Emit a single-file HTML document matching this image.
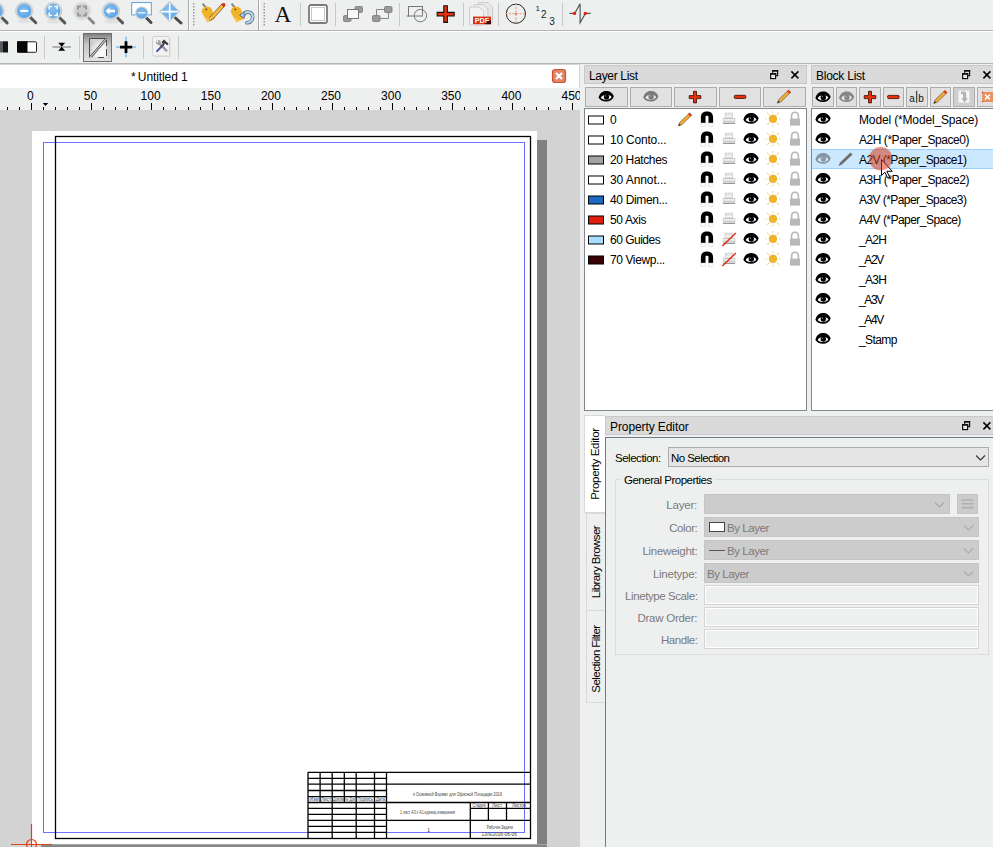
<!DOCTYPE html>
<html><head><meta charset="utf-8">
<style>
*{box-sizing:border-box;margin:0;padding:0}
html,body{width:993px;height:847px;overflow:hidden;background:#eef0f0;font-family:"Liberation Sans",sans-serif;font-size:11.5px;color:#000}
.a{position:absolute}
.t{position:absolute;white-space:nowrap;line-height:1}
svg{position:absolute;overflow:visible}
.btn{position:absolute;background:#e1e1e1;border:1px solid #adadad}
</style></head><body>
<svg width="0" height="0" style="left:0;top:0">
<defs>
  <radialGradient id="gBlue" cx="0.45" cy="0.4" r="0.6"><stop offset="0" stop-color="#86bff0"/><stop offset="1" stop-color="#5aa5e8"/></radialGradient>
  <g id="mag">
    <ellipse cx="1" cy="10.5" rx="8" ry="2" fill="#000" opacity="0.05"/>
    <line x1="6.2" y1="6.5" x2="11.6" y2="11.9" stroke="#575757" stroke-width="2.9" stroke-linecap="round"/>
    <circle cx="0" cy="0" r="8.8" fill="#d6d6d6" stroke="#c4c4c4" stroke-width="0.6"/>
    <circle cx="0" cy="0" r="7.2" fill="url(#gBlue)"/>
  </g>
  <g id="magGray">
    <line x1="6.2" y1="6.5" x2="11.6" y2="11.9" stroke="#8a8a8a" stroke-width="2.9" stroke-linecap="round"/>
    <circle cx="0" cy="0" r="8.8" fill="#e2e2e2" stroke="#d4d4d4" stroke-width="0.6"/>
    <circle cx="0" cy="0" r="7.2" fill="#cdcdcd"/>
  </g>
  <g id="eye">
    <path d="M-7.6,1.2 C-6.5,-3.8 -3,-5.4 0.2,-5.4 C3.5,-5.4 6.6,-3.6 7.6,0.3 C6.4,3.8 3.5,5.3 0,5.3 C-3.5,5.3 -6.3,4 -7.6,1.2Z" fill="#000"/>
    <path d="M-5.3,1.4 C-4.2,-0.8 -2,-1.6 0,-1.6 C2.2,-1.6 4.4,-0.9 5.4,0.8 C4.2,3 2.2,3.4 0,3.4 C-2.2,3.4 -4.2,3 -5.3,1.4Z" fill="#fff"/>
    <circle cx="0.3" cy="0.6" r="2.7" fill="#000"/>
    <circle cx="-0.6" cy="-0.3" r="0.7" fill="#777"/>
  </g>

  <g id="eyeG">
    <path d="M-7.6,1.2 C-6.5,-3.8 -3,-5.4 0.2,-5.4 C3.5,-5.4 6.6,-3.6 7.6,0.3 C6.4,3.8 3.5,5.3 0,5.3 C-3.5,5.3 -6.3,4 -7.6,1.2Z" fill="#000"/>
    <path d="M-5.3,1.4 C-4.2,-0.8 -2,-1.6 0,-1.6 C2.2,-1.6 4.4,-0.9 5.4,0.8 C4.2,3 2.2,3.4 0,3.4 C-2.2,3.4 -4.2,3 -5.3,1.4Z" fill="#fff"/>
    <circle cx="0.3" cy="0.6" r="2.7" fill="#000"/>
    <circle cx="-0.6" cy="-0.3" r="0.7" fill="#777"/>
  </g>
  <g id="pencil">
    <path d="M-6.7,6.5 L-5.2,2.8 L4.5,-6.6 L6.8,-4.4 L-2.9,5.1Z" fill="#f0a830" stroke="#555" stroke-width="0.6"/>
    <path d="M3,-5.2 L4.5,-6.6 L6.8,-4.4 L5.3,-3Z" fill="#e8301a"/>
    <path d="M-6.7,6.5 L-5.6,3.9 L-4.1,5.4Z" fill="#333"/>
  </g>
  <g id="magnet">
    <path d="M-6.1,4 V-1.5 C-6.1,-5.8 -3.5,-7.4 0,-7.4 C3.5,-7.4 6.1,-5.8 6.1,-1.5 V4 H1.5 V-1.8 C1.5,-3 0.8,-3.3 0,-3.3 C-0.8,-3.3 -1.5,-3 -1.5,-1.8 V4Z" fill="#000"/>
    <rect x="-6.1" y="4" width="4.6" height="3.4" fill="#fff" stroke="#d0d0d0" stroke-width="0.5"/>
    <rect x="1.5" y="4" width="4.6" height="3.4" fill="#fff" stroke="#d0d0d0" stroke-width="0.5"/>
  </g>
  <g id="printer">
    <rect x="-3.9" y="-5.9" width="7.6" height="5.5" fill="#e6e6e6" stroke="#cacaca" stroke-width="0.7"/>
    <rect x="-3.2" y="-3" width="6.2" height="1.2" fill="#f8f8f8"/>
    <rect x="-4" y="-1.2" width="7.8" height="1" fill="#a8a8a8"/>
    <rect x="-5.8" y="-0.4" width="11.7" height="5" fill="#eef0f0" stroke="#c4c4c4" stroke-width="0.7"/>
    <rect x="-5.2" y="1.8" width="10.5" height="1" fill="#c0c0c0"/>
    <rect x="-5.8" y="3.8" width="11.7" height="1.1" fill="#8e8e8e"/>
  </g>
  <g id="sun">
    <g stroke="#f3d49a" stroke-width="1.3">
      <line x1="0" y1="-7.6" x2="0" y2="-6"/><line x1="0" y1="6" x2="0" y2="7.6"/>
      <line x1="-7.6" y1="0" x2="-6" y2="0"/><line x1="6" y1="0" x2="7.6" y2="0"/>
    </g>
    <g stroke="#f0b850" stroke-width="0.9">
      <line x1="-6" y1="-6" x2="-3.9" y2="-3.9"/><line x1="6" y1="6" x2="3.9" y2="3.9"/>
      <line x1="-6" y1="6" x2="-3.9" y2="3.9"/><line x1="6" y1="-6" x2="3.9" y2="-3.9"/>
    </g>
    <circle cx="0" cy="0" r="3.9" fill="#f0b428" stroke="#e0a020" stroke-width="0.5"/>
  </g>
  <g id="lock">
    <path d="M-3.4,0 V-3 C-3.4,-5.7 -1.8,-6.7 0,-6.7 C1.8,-6.7 3.4,-5.7 3.4,-3 V0" fill="none" stroke="#b8b8b8" stroke-width="1.6"/>
    <rect x="-5" y="-0.4" width="10" height="7" fill="#b8b8b8"/>
  </g>
</defs>
</svg>

<!-- ========== TOOLBAR ROW 1 ========== -->
<div class="a" style="left:0;top:30px;width:993px;height:1px;background:#b4b4b4"></div>
<div class="a" style="left:0;top:31px;width:993px;height:1px;background:#fff"></div>
<div class="a" style="left:0;top:63px;width:993px;height:1px;background:#b4b4b4"></div>
<svg width="993" height="64" style="left:0;top:0">
  <!-- partial magnifier -->
  <use href="#mag" x="-4.5" y="11"/>
  <!-- zoom out -->
  <use href="#mag" x="24.2" y="10.9"/>
  <rect x="20.2" y="9.9" width="8" height="2" fill="#fff"/>
  <!-- zoom auto -->
  <use href="#mag" x="53.2" y="11"/>
  <path d="M49.2,9.5 v-3 h3 M54.2,6.5 h3 v3 M57.2,12.5 v3 h-3 M52.2,15.5 h-3 v-3" stroke="#fff" stroke-width="1.5" fill="none"/>
  <!-- zoom previous (disabled) -->
  <use href="#magGray" x="82" y="11"/>
  <path d="M78,9.5 v-3 h3 M83,6.5 h3 v3 M86,12.5 v3 h-3 M81,15.5 h-3 v-3" stroke="#9a9a9a" stroke-width="2" fill="none"/>
  <!-- zoom back -->
  <use href="#mag" x="111" y="11"/>
  <path d="M105.5,11 l4,-3.5 v2.2 h5.5 v2.6 h-5.5 v2.2z" fill="#fff"/>
  <!-- zoom window -->
  <rect x="131.7" y="2.6" width="19.6" height="12.3" fill="#fff" stroke="#5a9fe0" stroke-width="1"/>
  <line x1="146" y1="17.5" x2="151" y2="22.5" stroke="#4a4a4a" stroke-width="3" stroke-linecap="round"/>
  <circle cx="141.7" cy="13" r="6.6" fill="#cfcfcf"/>
  <circle cx="141.7" cy="13" r="5.4" fill="url(#gBlue)"/><rect x="137.5" y="12" width="8.4" height="1.6" fill="#cfe6fa"/>
  <!-- zoom pan -->
  <line x1="175" y1="17.5" x2="181" y2="23" stroke="#4a4a4a" stroke-width="3" stroke-linecap="round"/>
  <path d="M169.7,1.7 L179.6,11.6 L169.7,21.5 L159.8,11.6Z" fill="url(#gBlue)" stroke="#d0d0d0" stroke-width="1.2"/>
  <path d="M169.7,3 v17.2 M161,11.6 h17.4" stroke="#fff" stroke-width="1.6"/>
  <!-- separator + grip -->
  <rect x="188" y="0" width="1" height="30" fill="#a8a8a8"/>
  <rect x="189" y="0" width="1" height="30" fill="#fff"/>
  <g fill="#9a9a9a"><rect x="193" y="3" width="1.5" height="1.5"/><rect x="193" y="6" width="1.5" height="1.5"/><rect x="193" y="9" width="1.5" height="1.5"/><rect x="193" y="12" width="1.5" height="1.5"/><rect x="193" y="15" width="1.5" height="1.5"/><rect x="193" y="18" width="1.5" height="1.5"/><rect x="193" y="21" width="1.5" height="1.5"/><rect x="193" y="24" width="1.5" height="1.5"/></g>
  <!-- tag + pencil -->
  <line x1="202.6" y1="3.6" x2="205.6" y2="7.2" stroke="#8a8a8a" stroke-width="2.2"/>
  <path d="M201.5,11.8 C202,8.5 204.5,6.6 207,6.6 C209,6.6 211,7.5 212,9.2 L215,18.6 L207.4,22.6 Z" fill="#f0b428"/>
  <path d="M203.5,16 L207.4,22.6 L211,20.7Z" fill="#f6cc6a" opacity="0.8"/>
  <circle cx="206.3" cy="9.4" r="0.9" fill="#5a4a2a"/>
  <path d="M209.8,17.2 L222,3.8 L224.6,6.3 L212.3,19.7 L209.6,20.2Z" fill="#f6b83a" stroke="#5a4a3a" stroke-width="0.7"/>
  <path d="M221.2,4.6 L222.3,3.5 C223.3,2.6 224.4,2.8 225,3.6 C225.6,4.4 225.5,5.3 224.8,6.1 L223.7,7.2Z" fill="#e22a10"/>
  <path d="M209.8,17.2 L211.2,18.6 L209.6,20.2Z" fill="#fff0d0"/>
  <!-- tag + undo -->
  <line x1="231.6" y1="3.6" x2="234.6" y2="7.2" stroke="#8a8a8a" stroke-width="2.2"/>
  <path d="M230.5,11.8 C231,8.5 233.5,6.6 236,6.6 C238,6.6 240,7.5 241,9.2 L244,18.6 L236.4,22.6 Z" fill="#f0b428"/>
  <path d="M232.5,16 L236.4,22.6 L240,20.7Z" fill="#f6cc6a" opacity="0.8"/>
  <circle cx="235.3" cy="9.4" r="0.9" fill="#5a4a2a"/>
  <path d="M243.5,15.5 C244.5,12.5 247,11.8 249,12.2 C251.5,12.8 253,15 252.6,18 C252.2,21 249.5,23 247,22.8" fill="none" stroke="#5a6470" stroke-width="3.6" stroke-linecap="round"/>
  <path d="M243.5,15.5 C244.5,12.5 247,11.8 249,12.2 C251.5,12.8 253,15 252.6,18 C252.2,21 249.5,23 247,22.8" fill="none" stroke="#b4defa" stroke-width="2" stroke-linecap="round"/>
  <path d="M239.6,15.2 L244.2,11.6 L244.2,18.4Z" fill="#a6d6f6" stroke="#5a6470" stroke-width="0.9" stroke-linejoin="round"/>
  <!-- separator + grip -->
  <rect x="258" y="0" width="1" height="30" fill="#a8a8a8"/>
  <rect x="259" y="0" width="1" height="30" fill="#fff"/>
  <g fill="#9a9a9a"><rect x="263.5" y="3" width="1.5" height="1.5"/><rect x="263.5" y="6" width="1.5" height="1.5"/><rect x="263.5" y="9" width="1.5" height="1.5"/><rect x="263.5" y="12" width="1.5" height="1.5"/><rect x="263.5" y="15" width="1.5" height="1.5"/><rect x="263.5" y="18" width="1.5" height="1.5"/><rect x="263.5" y="21" width="1.5" height="1.5"/><rect x="263.5" y="24" width="1.5" height="1.5"/></g>
  <!-- A -->
  <text x="283" y="22.3" text-anchor="middle" font-family="Liberation Serif" font-size="23.3" fill="#111">A</text>
  <rect x="300" y="3" width="1" height="23" fill="#c8c8c8"/>
  <!-- square -->
  <rect x="309" y="5" width="18" height="18" rx="2" fill="#fff" stroke="#7a7a7a" stroke-width="1.8"/>
  <rect x="311.5" y="7.5" width="13" height="13" fill="#fff" stroke="#c8c8c8" stroke-width="1"/>
  <rect x="335" y="3" width="1" height="23" fill="#c8c8c8"/>
  <!-- block icons -->
  <rect x="343.5" y="15.5" width="7.5" height="6" rx="1.2" fill="#9a9a9a" stroke="#777" stroke-width="0.8"/>
  <rect x="355" y="6.5" width="7.5" height="6" rx="1.2" fill="#9a9a9a" stroke="#777" stroke-width="0.8"/>
  <rect x="347.5" y="9.5" width="11" height="9" fill="#f8f8f8" stroke="#777" stroke-width="1"/>
  <path d="M376.5,15.5 V9.5 H388.5 V18.5 H380" fill="none" stroke="#888" stroke-width="1"/>
  <rect x="372.5" y="15.5" width="7.5" height="6" rx="1.2" fill="#9a9a9a" stroke="#777" stroke-width="0.8"/>
  <rect x="384.5" y="6.5" width="7.5" height="6" rx="1.2" fill="#9a9a9a" stroke="#777" stroke-width="0.8"/>
  <rect x="399" y="3" width="1" height="23" fill="#c8c8c8"/>
  <!-- rect circle -->
  <rect x="408.5" y="6.5" width="14" height="9.5" fill="none" stroke="#777" stroke-width="1"/>
  <circle cx="420.4" cy="15.6" r="6.2" fill="none" stroke="#777" stroke-width="1"/>
  <line x1="406.5" y1="16" x2="409" y2="16" stroke="#777" stroke-width="1"/>
  <!-- red cross -->
  <path d="M443.8,5.8 h3.6 v6.6 h6.8 v3.6 h-6.8 v6.4 h-3.6 v-6.4 h-6.6 v-3.6 h6.6z" fill="#e8300a" stroke="#111" stroke-width="1.1"/>
  <rect x="463" y="3" width="1" height="23" fill="#c8c8c8"/>
  <!-- pdf -->
  <path d="M478.5,2.5 h9.5 l4.5,4.5 v16 h-14z" fill="#e8e8e8" stroke="#c4c4c4" stroke-width="0.8"/>
  <path d="M474,4.5 h9.5 l4.5,4.5 v15 h-14z" fill="#ececec" stroke="#c4c4c4" stroke-width="0.8"/>
  <path d="M469.5,7 h9.5 l4.5,4.5 v13.5 h-14z" fill="#f2f2f2" stroke="#c4c4c4" stroke-width="0.8"/>
  <rect x="473" y="16.6" width="18" height="7.6" fill="#d8300c"/>
  <rect x="485" y="20.5" width="6" height="3.7" fill="#3a0a0a"/>
  <text x="482" y="23.4" text-anchor="middle" font-family="Liberation Sans" font-weight="bold" font-size="7.2" fill="#fff">PDF</text>
  <rect x="498" y="3" width="1" height="23" fill="#c8c8c8"/>
  <!-- circle crosshair -->
  <circle cx="515.9" cy="13.7" r="9.6" fill="none" stroke="#222" stroke-width="1"/>
  <path d="M515.9,3.5 v20.5 M505.5,13.7 h20.8" stroke="#f0a080" stroke-width="1.3" stroke-dasharray="2,1.5"/>
  <circle cx="515.9" cy="13.7" r="1" fill="#e08060"/>
  <!-- 123 -->
  <text x="535.5" y="10.6" font-family="Liberation Sans" font-size="8" fill="#222">1</text>
  <text x="541" y="17.5" font-family="Liberation Sans" font-size="10" fill="#222">2</text>
  <text x="549.3" y="24.8" font-family="Liberation Sans" font-size="10" fill="#222">3</text>
  <rect x="562" y="3" width="1" height="23" fill="#c8c8c8"/>
  <!-- spike -->
  <path d="M569.5,13.4 H574.8 L580.1,3.7 V22.7 L585.4,13.4 H590.7" fill="none" stroke="#555" stroke-width="1.2"/>
  <circle cx="574.5" cy="13.4" r="1.7" fill="#e8200a"/>
  <circle cx="585.3" cy="13.4" r="1.7" fill="#e8200a"/>

  <!-- ========== ROW 2 ========== -->
  <rect x="0" y="41.3" width="3" height="11.2" fill="#5a5a62"/>
  <rect x="3" y="41.3" width="5" height="11.2" fill="#151515"/>
  <rect x="17.5" y="41.8" width="19" height="10.5" rx="1" fill="#fff" stroke="#222" stroke-width="1"/>
  <rect x="17" y="41.3" width="10.5" height="11.2" fill="#050505"/>
  <rect x="44" y="36" width="1" height="23" fill="#c8c8c8"/>
  <line x1="52.5" y1="47" x2="71" y2="47" stroke="#9a9a9a" stroke-width="1.5"/>
  <path d="M58.2,42.8 h7 l-3.5,4 l3.5,4 h-7 l3.5,-4z" fill="#000"/>
  <rect x="79" y="36" width="1" height="23" fill="#c8c8c8"/>
  <!-- pressed button -->
  <defs><linearGradient id="gPress" x1="0" y1="0" x2="0" y2="1"><stop offset="0" stop-color="#8c8c8c"/><stop offset="0.35" stop-color="#b8b8b8"/><stop offset="1" stop-color="#dcdcdc"/></linearGradient>
  <radialGradient id="gPaper" cx="0.6" cy="0.65" r="0.6"><stop offset="0" stop-color="#fff"/><stop offset="1" stop-color="#d8d8d8"/></radialGradient></defs>
  <defs><linearGradient id="gPress2" x1="0" y1="0" x2="0" y2="1"><stop offset="0" stop-color="#777"/><stop offset="0.12" stop-color="#9a9a9a"/><stop offset="0.4" stop-color="#c6c6c6"/><stop offset="1" stop-color="#e2e2e2"/></linearGradient>
  <radialGradient id="gPaper2" cx="0.7" cy="0.75" r="0.75"><stop offset="0" stop-color="#fff"/><stop offset="0.6" stop-color="#ececec"/><stop offset="1" stop-color="#cfcfcf"/></radialGradient></defs>
  <rect x="83.5" y="33.5" width="28" height="28" fill="url(#gPress2)" stroke="#6e6e6e" stroke-width="1"/>
  <rect x="89.5" y="38.5" width="17" height="19" fill="url(#gPaper2)"/>
  <path d="M89.5,57.5 V38.5 H106.5" fill="none" stroke="#4a4a4a" stroke-width="1"/>
  <path d="M106.5,40 V46 M106.5,49 V56 M98,57.5 H104" fill="none" stroke="#4a4a4a" stroke-width="1"/>
  <line x1="91" y1="56.6" x2="106" y2="39" stroke="#555" stroke-width="2.6"/>
  <line x1="91" y1="56.6" x2="106" y2="39" stroke="#e8e8e8" stroke-width="1"/>
  <circle cx="91.6" cy="44" r="0.4" fill="#666"/><circle cx="91.6" cy="50" r="0.4" fill="#666"/>
  <!-- crosshair plus -->
  <path d="M126,36.7 v20.6 M115.9,47.1 h20.1" stroke="#8ac8f6" stroke-width="1.8"/>
  <path d="M126,41.3 v11.7 M120,47.1 h12.2" stroke="#000" stroke-width="2.8"/>
  <rect x="143" y="36" width="1" height="23" fill="#c8c8c8"/>
  <!-- tools -->
  <rect x="153.5" y="37.5" width="17" height="19.5" rx="1.5" fill="#b8b8b8" opacity="0.35"/>
  <rect x="152.5" y="36.5" width="17" height="19.5" rx="1.5" fill="#f2f2f2" stroke="#d2d2d2" stroke-width="1"/>
  <line x1="158.5" y1="42.6" x2="166.4" y2="50.6" stroke="#9a9a9a" stroke-width="2.4" stroke-linecap="round"/>
  <circle cx="158.3" cy="42.3" r="2.4" fill="#a0a0a0"/>
  <circle cx="157.4" cy="41.4" r="1" fill="#f2f2f2"/>
  <line x1="157" y1="51.2" x2="163.5" y2="44.5" stroke="#3a4aa8" stroke-width="1.8" stroke-linecap="round"/>
  <line x1="160.5" y1="47.6" x2="163.5" y2="44.5" stroke="#555" stroke-width="1.8"/>
  <path d="M161.5,42 L164,39.6 L168.6,43.8 L167.6,45.2 L164.5,43.4 L163.4,44.6Z" fill="#3a3a3a"/>
  <rect x="178" y="36" width="1" height="23" fill="#c8c8c8"/>
</svg>

<!-- ========== DOC TAB ========== -->
<div class="a" style="left:0;top:64px;width:580px;height:1px;background:#d6d6d6"></div><div class="a" style="left:0;top:65px;width:579px;height:23px;background:#fff"></div><div class="a" style="left:579px;top:64px;width:1px;height:24px;background:#d2d2d2"></div>
<div class="t" style="left:131px;top:71px;font-size:12px;letter-spacing:-0.1px">*&#8201;Untitled 1</div>
<svg width="16" height="16" style="left:551px;top:68px"><rect x="1.5" y="1.5" width="13" height="13" rx="2.5" fill="#e0846a" stroke="#d0502a" stroke-width="1.2"/><path d="M5,5 L11,11 M11,5 L5,11" stroke="#fff" stroke-width="2.2"/></svg>
<!-- ========== RULER ========== -->
<div class="a" style="left:0;top:88px;width:580px;height:22px;background:#eef0f0;overflow:hidden">
<svg width="580" height="22" style="left:0;top:0">
<rect x="7" y="19" width="1" height="3" fill="#000"/>
<rect x="19" y="19" width="1" height="3" fill="#000"/>
<rect x="31" y="15" width="1" height="7" fill="#000"/>
<rect x="43" y="19" width="1" height="3" fill="#000"/>
<rect x="55" y="19" width="1" height="3" fill="#000"/>
<rect x="67" y="19" width="1" height="3" fill="#000"/>
<rect x="79" y="19" width="1" height="3" fill="#000"/>
<rect x="91" y="15" width="1" height="7" fill="#000"/>
<rect x="103" y="19" width="1" height="3" fill="#000"/>
<rect x="115" y="19" width="1" height="3" fill="#000"/>
<rect x="127" y="19" width="1" height="3" fill="#000"/>
<rect x="139" y="19" width="1" height="3" fill="#000"/>
<rect x="151" y="15" width="1" height="7" fill="#000"/>
<rect x="163" y="19" width="1" height="3" fill="#000"/>
<rect x="175" y="19" width="1" height="3" fill="#000"/>
<rect x="188" y="19" width="1" height="3" fill="#000"/>
<rect x="200" y="19" width="1" height="3" fill="#000"/>
<rect x="212" y="15" width="1" height="7" fill="#000"/>
<rect x="224" y="19" width="1" height="3" fill="#000"/>
<rect x="236" y="19" width="1" height="3" fill="#000"/>
<rect x="248" y="19" width="1" height="3" fill="#000"/>
<rect x="260" y="19" width="1" height="3" fill="#000"/>
<rect x="272" y="15" width="1" height="7" fill="#000"/>
<rect x="284" y="19" width="1" height="3" fill="#000"/>
<rect x="296" y="19" width="1" height="3" fill="#000"/>
<rect x="308" y="19" width="1" height="3" fill="#000"/>
<rect x="320" y="19" width="1" height="3" fill="#000"/>
<rect x="332" y="15" width="1" height="7" fill="#000"/>
<rect x="344" y="19" width="1" height="3" fill="#000"/>
<rect x="356" y="19" width="1" height="3" fill="#000"/>
<rect x="368" y="19" width="1" height="3" fill="#000"/>
<rect x="380" y="19" width="1" height="3" fill="#000"/>
<rect x="392" y="15" width="1" height="7" fill="#000"/>
<rect x="404" y="19" width="1" height="3" fill="#000"/>
<rect x="416" y="19" width="1" height="3" fill="#000"/>
<rect x="428" y="19" width="1" height="3" fill="#000"/>
<rect x="440" y="19" width="1" height="3" fill="#000"/>
<rect x="452" y="15" width="1" height="7" fill="#000"/>
<rect x="464" y="19" width="1" height="3" fill="#000"/>
<rect x="476" y="19" width="1" height="3" fill="#000"/>
<rect x="488" y="19" width="1" height="3" fill="#000"/>
<rect x="500" y="19" width="1" height="3" fill="#000"/>
<rect x="512" y="15" width="1" height="7" fill="#000"/>
<rect x="524" y="19" width="1" height="3" fill="#000"/>
<rect x="536" y="19" width="1" height="3" fill="#000"/>
<rect x="548" y="19" width="1" height="3" fill="#000"/>
<rect x="560" y="19" width="1" height="3" fill="#000"/>
<rect x="572" y="15" width="1" height="7" fill="#000"/>
<text x="30.4" y="12" text-anchor="middle" font-family="Liberation Sans" font-size="12" fill="#000">0</text>
<text x="90.5" y="12" text-anchor="middle" font-family="Liberation Sans" font-size="12" fill="#000">50</text>
<text x="150.6" y="12" text-anchor="middle" font-family="Liberation Sans" font-size="12" fill="#000">100</text>
<text x="210.8" y="12" text-anchor="middle" font-family="Liberation Sans" font-size="12" fill="#000">150</text>
<text x="270.9" y="12" text-anchor="middle" font-family="Liberation Sans" font-size="12" fill="#000">200</text>
<text x="331.0" y="12" text-anchor="middle" font-family="Liberation Sans" font-size="12" fill="#000">250</text>
<text x="391.1" y="12" text-anchor="middle" font-family="Liberation Sans" font-size="12" fill="#000">300</text>
<text x="451.2" y="12" text-anchor="middle" font-family="Liberation Sans" font-size="12" fill="#000">350</text>
<text x="511.4" y="12" text-anchor="middle" font-family="Liberation Sans" font-size="12" fill="#000">400</text>
<text x="571.5" y="12" text-anchor="middle" font-family="Liberation Sans" font-size="12" fill="#000">450</text>
<path d="M42.8,15 h5.4 l-2.7,3z" fill="#000"/>
</svg></div>
<!-- ========== CANVAS ========== -->
<div class="a" style="left:0;top:110px;width:580px;height:737px;background:#d3d3d3;overflow:hidden"></div>
<div class="a" style="left:537px;top:140px;width:10px;height:710px;background:#808080"></div>
<div class="a" style="left:41px;top:844px;width:506px;height:10px;background:linear-gradient(#b0b0b0 0px,#8a8a8a 1.5px,#808080 3px)"></div>
<div class="a" style="left:32px;top:131px;width:505px;height:713px;background:#fff"></div>
<svg width="580" height="847" style="left:0;top:0">
<rect x="43.5" y="142.5" width="481" height="690" fill="none" stroke="#7070ff" stroke-width="1"/>
<rect x="55.5" y="136.5" width="475" height="702" fill="none" stroke="#000" stroke-width="1.3"/>
<line x1="308" y1="772.3" x2="386.5" y2="772.3" stroke="#000" stroke-width="1.3"/>
<line x1="308" y1="778.3" x2="386.5" y2="778.3" stroke="#000" stroke-width="1.3"/>
<line x1="308" y1="784.2" x2="386.5" y2="784.2" stroke="#000" stroke-width="1.3"/>
<line x1="308" y1="790.5" x2="386.5" y2="790.5" stroke="#000" stroke-width="1.3"/>
<line x1="308" y1="796.6" x2="386.5" y2="796.6" stroke="#000" stroke-width="1.3"/>
<line x1="308" y1="802.5" x2="386.5" y2="802.5" stroke="#000" stroke-width="1.3"/>
<line x1="308" y1="808.4" x2="386.5" y2="808.4" stroke="#000" stroke-width="1.3"/>
<line x1="308" y1="814.4" x2="386.5" y2="814.4" stroke="#000" stroke-width="1.3"/>
<line x1="308" y1="820.4" x2="386.5" y2="820.4" stroke="#000" stroke-width="1.3"/>
<line x1="308" y1="826.4" x2="386.5" y2="826.4" stroke="#000" stroke-width="1.3"/>
<line x1="308" y1="832.4" x2="386.5" y2="832.4" stroke="#000" stroke-width="1.3"/>
<line x1="308" y1="772.3" x2="308" y2="838.5" stroke="#000" stroke-width="1.3"/>
<line x1="332.2" y1="772.3" x2="332.2" y2="838.5" stroke="#000" stroke-width="1.3"/>
<line x1="356.2" y1="772.3" x2="356.2" y2="838.5" stroke="#000" stroke-width="1.3"/>
<line x1="374.5" y1="772.3" x2="374.5" y2="838.5" stroke="#000" stroke-width="1.3"/>
<line x1="386.5" y1="772.3" x2="386.5" y2="838.5" stroke="#000" stroke-width="1.3"/>
<line x1="320.1" y1="772.3" x2="320.1" y2="802.5" stroke="#000" stroke-width="1.3"/>
<line x1="344.3" y1="772.3" x2="344.3" y2="802.5" stroke="#000" stroke-width="1.3"/>
<line x1="386.5" y1="772.3" x2="530.5" y2="772.3" stroke="#000" stroke-width="1.3"/>
<line x1="386.5" y1="784.1" x2="530.5" y2="784.1" stroke="#000" stroke-width="1.3"/>
<line x1="386.5" y1="802.5" x2="530.5" y2="802.5" stroke="#000" stroke-width="1.3"/>
<line x1="386.5" y1="820.4" x2="530.5" y2="820.4" stroke="#000" stroke-width="1.3"/>
<line x1="470.3" y1="802.5" x2="470.3" y2="838.5" stroke="#000" stroke-width="1.3"/>
<line x1="470.3" y1="808.4" x2="530.5" y2="808.4" stroke="#000" stroke-width="1.3"/>
<line x1="488.4" y1="802.5" x2="488.4" y2="820.4" stroke="#000" stroke-width="1.3"/>
<line x1="506.5" y1="802.5" x2="506.5" y2="820.4" stroke="#000" stroke-width="1.3"/>
<text x="309.5" y="801" textLength="9.0" lengthAdjust="spacingAndGlyphs" font-family="Liberation Sans" font-size="4.8" fill="#3a3a3a">Изм</text>
<text x="321" y="801" textLength="10" lengthAdjust="spacingAndGlyphs" font-family="Liberation Sans" font-size="4.8" fill="#3a3a3a">Лист</text>
<text x="333" y="801" textLength="10.5" lengthAdjust="spacingAndGlyphs" font-family="Liberation Sans" font-size="4.8" fill="#3a3a3a">Докум</text>
<text x="345" y="801" textLength="10" lengthAdjust="spacingAndGlyphs" font-family="Liberation Sans" font-size="4.8" fill="#3a3a3a">№ Док</text>
<text x="357.5" y="801" textLength="15.5" lengthAdjust="spacingAndGlyphs" font-family="Liberation Sans" font-size="4.8" fill="#3a3a3a">Подпись</text>
<text x="376" y="801" textLength="9" lengthAdjust="spacingAndGlyphs" font-family="Liberation Sans" font-size="4.8" fill="#3a3a3a">Дата</text>
<text x="413" y="796.3" textLength="89" lengthAdjust="spacingAndGlyphs" font-family="Liberation Sans" font-size="5.6" fill="#3a3a3a">п Основной Формат для Офисной Площадки 2016</text>
<text x="400" y="814.3" textLength="55" lengthAdjust="spacingAndGlyphs" font-family="Liberation Sans" font-size="5.6" fill="#3a3a3a">1 лист А3 х А1 единиц измерения</text>
<text x="427.2" y="831.5" textLength="2.8000000000000114" lengthAdjust="spacingAndGlyphs" font-family="Liberation Sans" font-size="5.6" fill="#3a3a3a">1</text>
<text x="472.5" y="806.6" textLength="13.0" lengthAdjust="spacingAndGlyphs" font-family="Liberation Sans" font-size="4.6" fill="#3a3a3a">Стадия</text>
<text x="492" y="806.6" textLength="10" lengthAdjust="spacingAndGlyphs" font-family="Liberation Sans" font-size="4.6" fill="#3a3a3a">Лист</text>
<text x="512" y="806.6" textLength="14" lengthAdjust="spacingAndGlyphs" font-family="Liberation Sans" font-size="4.6" fill="#3a3a3a">Листов</text>
<text x="486.7" y="829.2" textLength="26.19999999999999" lengthAdjust="spacingAndGlyphs" font-family="Liberation Sans" font-size="5.6" fill="#3a3a3a">Рабочие Задачи</text>
<text x="481.6" y="835.7" textLength="35.299999999999955" lengthAdjust="spacingAndGlyphs" font-family="Liberation Sans" font-size="5.6" fill="#3a3a3a">13/9/2016-06-06</text>
<g stroke="#e0401a" stroke-width="1.2" fill="none"><line x1="11" y1="844.5" x2="52" y2="844.5"/><line x1="31.5" y1="824" x2="31.5" y2="850"/><circle cx="31.5" cy="844.5" r="5"/></g>
</svg>
<!-- ========== LAYER LIST DOCK ========== -->
<div class="a" style="left:584px;top:65px;width:223px;height:19px;background:#dadada;border:1px solid #c9c9c9"></div>
<div class="t" style="left:589px;top:70px;font-size:12px;letter-spacing:-0.333px">Layer List</div>
<svg width="30" height="12" style="left:770px;top:70px"><path d="M2.6,2.8 V0.6 H7.6 V5.6 H5.4" fill="none" stroke="#111" stroke-width="1.2"/><rect x="2.6" y="0" width="5.6" height="1.6" fill="#111"/><rect x="0.6" y="3.6" width="5" height="5" fill="#e8e8e8" stroke="#111" stroke-width="1.2"/><rect x="0" y="3" width="6.2" height="1.7" fill="#111"/><path d="M21.4,1.4 L28.4,8.4 M28.4,1.4 L21.4,8.4" stroke="#000" stroke-width="1.5"/></svg>
<div class="btn" style="left:585px;top:87px;width:43px;height:20px"></div>
<div class="btn" style="left:630px;top:87px;width:42px;height:20px"></div>
<div class="btn" style="left:674px;top:87px;width:43px;height:20px"></div>
<div class="btn" style="left:719px;top:87px;width:42px;height:20px"></div>
<div class="btn" style="left:763px;top:87px;width:43px;height:20px"></div>
<svg width="993" height="847" style="left:0;top:0">
<use href="#eye" x="606.2" y="96.3"/>
<g opacity="0.45"><use href="#eyeG" x="650.8" y="96.3"/></g>
<path d="M693.5,91.3 h3 v4.3 h4.3 v3 h-4.3 v4.3 h-3 v-4.3 h-4.3 v-3 h4.3z" fill="#e8300a" stroke="#3a0a00" stroke-width="0.8" stroke-linejoin="round"/>
<rect x="734.3" y="95.3" width="11.5" height="3.2" rx="1" fill="#e8300a" stroke="#3a0a00" stroke-width="0.8"/>
<use href="#pencil" x="784" y="96.7"/>
</svg>
<div class="a" style="left:584px;top:108px;width:223px;height:303px;background:#fff;border:1px solid #828790"></div>
<svg width="993" height="847" style="left:0;top:0">
<rect x="588.5" y="116.0" width="15" height="8" fill="#fff" stroke="#000" stroke-width="1"/>
<use href="#pencil" x="685" y="119.5"/>
<use href="#magnet" x="707" y="119"/>
<use href="#printer" x="729" y="119"/>
<use href="#eye" x="751" y="118.5"/>
<use href="#sun" x="773" y="118.8"/>
<use href="#lock" x="795" y="119"/>
<rect x="588.5" y="136.0" width="15" height="8" fill="#fff" stroke="#000" stroke-width="1"/>
<use href="#magnet" x="707" y="139"/>
<use href="#printer" x="729" y="139"/>
<use href="#eye" x="751" y="138.5"/>
<use href="#sun" x="773" y="138.8"/>
<use href="#lock" x="795" y="139"/>
<rect x="588.5" y="156.0" width="15" height="8" fill="#a4a4a4" stroke="#000" stroke-width="1"/>
<use href="#magnet" x="707" y="159"/>
<use href="#printer" x="729" y="159"/>
<use href="#eye" x="751" y="158.5"/>
<use href="#sun" x="773" y="158.8"/>
<use href="#lock" x="795" y="159"/>
<rect x="588.5" y="176.0" width="15" height="8" fill="#fff" stroke="#000" stroke-width="1"/>
<use href="#magnet" x="707" y="179"/>
<use href="#printer" x="729" y="179"/>
<use href="#eye" x="751" y="178.5"/>
<use href="#sun" x="773" y="178.8"/>
<use href="#lock" x="795" y="179"/>
<rect x="588.5" y="196.0" width="15" height="8" fill="#1d6ac6" stroke="#000" stroke-width="1"/>
<use href="#magnet" x="707" y="199"/>
<use href="#printer" x="729" y="199"/>
<use href="#eye" x="751" y="198.5"/>
<use href="#sun" x="773" y="198.8"/>
<use href="#lock" x="795" y="199"/>
<rect x="588.5" y="216.0" width="15" height="8" fill="#e0200a" stroke="#000" stroke-width="1"/>
<use href="#magnet" x="707" y="219"/>
<use href="#printer" x="729" y="219"/>
<use href="#eye" x="751" y="218.5"/>
<use href="#sun" x="773" y="218.8"/>
<use href="#lock" x="795" y="219"/>
<rect x="588.5" y="236.0" width="15" height="8" fill="#a6dcff" stroke="#000" stroke-width="1"/>
<use href="#magnet" x="707" y="239"/>
<use href="#printer" x="729" y="239"/>
<line x1="722.4" y1="246" x2="735.8" y2="233" stroke="#e02a10" stroke-width="1.4"/>
<use href="#eye" x="751" y="238.5"/>
<use href="#sun" x="773" y="238.8"/>
<use href="#lock" x="795" y="239"/>
<rect x="588.5" y="256.0" width="15" height="8" fill="#3a0202" stroke="#000" stroke-width="1"/>
<use href="#magnet" x="707" y="259"/>
<use href="#printer" x="729" y="259"/>
<line x1="722.4" y1="266" x2="735.8" y2="253" stroke="#e02a10" stroke-width="1.4"/>
<use href="#eye" x="751" y="258.5"/>
<use href="#sun" x="773" y="258.8"/>
<use href="#lock" x="795" y="259"/>
</svg>
<div class="t" style="left:610px;top:114px;font-size:12px;letter-spacing:0.0px">0</div>
<div class="t" style="left:610px;top:134px;font-size:12px;letter-spacing:-0.22px">10 Conto...</div>
<div class="t" style="left:610px;top:154px;font-size:12px;letter-spacing:-0.356px">20 Hatches</div>
<div class="t" style="left:610px;top:174px;font-size:12px;letter-spacing:-0.09px">30 Annot...</div>
<div class="t" style="left:610px;top:194px;font-size:12px;letter-spacing:-0.35px">40 Dimen...</div>
<div class="t" style="left:610px;top:214px;font-size:12px;letter-spacing:-0.367px">50 Axis</div>
<div class="t" style="left:610px;top:234px;font-size:12px;letter-spacing:-0.5px">60 Guides</div>
<div class="t" style="left:610px;top:254px;font-size:12px;letter-spacing:-0.4px">70 Viewp...</div>
<!-- ========== BLOCK LIST DOCK ========== -->
<div class="a" style="left:811px;top:65px;width:190px;height:19px;background:#dadada;border:1px solid #c9c9c9"></div>
<div class="t" style="left:816px;top:70px;font-size:12px;letter-spacing:-0.244px">Block List</div>
<svg width="30" height="12" style="left:962px;top:70px"><path d="M2.6,2.8 V0.6 H7.6 V5.6 H5.4" fill="none" stroke="#111" stroke-width="1.2"/><rect x="2.6" y="0" width="5.6" height="1.6" fill="#111"/><rect x="0.6" y="3.6" width="5" height="5" fill="#e8e8e8" stroke="#111" stroke-width="1.2"/><rect x="0" y="3" width="6.2" height="1.7" fill="#111"/><path d="M21.4,1.4 L28.4,8.4 M28.4,1.4 L21.4,8.4" stroke="#000" stroke-width="1.5"/></svg>
<div class="btn" style="left:812px;top:87px;width:22px;height:20px;background:#e1e1e1;border-color:#adadad"></div>
<div class="btn" style="left:836px;top:87px;width:21px;height:20px;background:#e1e1e1;border-color:#adadad"></div>
<div class="btn" style="left:859px;top:87px;width:22px;height:20px;background:#e1e1e1;border-color:#adadad"></div>
<div class="btn" style="left:883px;top:87px;width:21px;height:20px;background:#e1e1e1;border-color:#adadad"></div>
<div class="btn" style="left:906px;top:87px;width:22px;height:20px;background:#e1e1e1;border-color:#adadad"></div>
<div class="btn" style="left:930px;top:87px;width:21px;height:20px;background:#e1e1e1;border-color:#adadad"></div>
<div class="btn" style="left:953px;top:87px;width:22px;height:20px;background:#cfcfcf;border-color:#adadad"></div>
<div class="btn" style="left:977px;top:87px;width:23px;height:20px;background:#e1e1e1;border-color:#adadad"></div>
<svg width="993" height="847" style="left:0;top:0">
<use href="#eye" x="823" y="96.8"/>
<g opacity="0.4"><use href="#eyeG" x="846.6" y="96.8"/></g>
<path d="M868.5,91.3 h3 v4.3 h4.3 v3 h-4.3 v4.3 h-3 v-4.3 h-4.3 v-3 h4.3z" fill="#e8300a" stroke="#3a0a00" stroke-width="0.8" stroke-linejoin="round"/>
<rect x="887.6" y="95.4" width="11.5" height="3.2" rx="1" fill="#e8300a" stroke="#3a0a00" stroke-width="0.8"/>
<text x="909.3" y="101.6" font-family="Liberation Sans" font-size="10" fill="#111">a</text><rect x="916.2" y="90.8" width="1" height="12" fill="#222"/><text x="918.3" y="101.6" font-family="Liberation Sans" font-size="10" fill="#111">b</text>
<use href="#pencil" x="940.4" y="97"/>
<rect x="958.5" y="90.6" width="10.8" height="12" fill="#f6f6f6"/>
<path d="M961,91.5 h3 c1.6,0 2.2,0.8 2.2,2.2 v4.5 h1.8 l-3.4,4.2 l-3.4,-4.2 h1.8 v-3.6 c0,-0.5 -0.3,-0.7 -0.7,-0.7 h-1.3z" fill="#b4b4b4"/>
<rect x="982.2" y="92" width="11" height="10" fill="#e89060"/>
<g fill="#e02a10"><circle cx="982.5" cy="92.3" r="0.7"/><circle cx="982.5" cy="101.6" r="0.7"/></g>
<path d="M985,94.5 l5,5 m0,-5 l-5,5" stroke="#fff" stroke-width="1.5"/>
</svg>
<div class="a" style="left:811px;top:108px;width:190px;height:303px;background:#fff;border:1px solid #828790"></div>
<div class="a" style="left:812px;top:149px;width:190px;height:20px;background:#cce8ff;border-top:1px solid #99d1ff;border-bottom:1px solid #99d1ff"></div>
<svg width="993" height="847" style="left:0;top:0">
<use href="#eye" x="823" y="118.5"/>
<use href="#eye" x="823" y="138.5"/>
<g opacity="0.35"><use href="#eyeG" x="823" y="158.5"/></g>
<path d="M838.5,166 L840,162.5 L850.5,152.5 L852.5,154.5 L842,164.5Z" fill="#6e6e6e"/>
<use href="#eye" x="823" y="178.5"/>
<use href="#eye" x="823" y="198.5"/>
<use href="#eye" x="823" y="218.5"/>
<use href="#eye" x="823" y="238.5"/>
<use href="#eye" x="823" y="258.5"/>
<use href="#eye" x="823" y="278.5"/>
<use href="#eye" x="823" y="298.5"/>
<use href="#eye" x="823" y="318.5"/>
<use href="#eye" x="823" y="338.5"/>
</svg>
<div class="t" style="left:859px;top:114px;font-size:12px;letter-spacing:-0.147px">Model (*Model_Space)</div>
<div class="t" style="left:859px;top:134px;font-size:12px;letter-spacing:-0.456px">A2H (*Paper_Space0)</div>
<div class="t" style="left:859px;top:154px;font-size:12px;letter-spacing:-0.561px">A2V (*Paper_Space1)</div>
<div class="t" style="left:859px;top:174px;font-size:12px;letter-spacing:-0.456px">A3H (*Paper_Space2)</div>
<div class="t" style="left:859px;top:194px;font-size:12px;letter-spacing:-0.561px">A3V (*Paper_Space3)</div>
<div class="t" style="left:859px;top:214px;font-size:12px;letter-spacing:-0.535px">A4V (*Paper_Space)</div>
<div class="t" style="left:859px;top:234px;font-size:12px;letter-spacing:-0.733px">_A2H</div>
<div class="t" style="left:859px;top:254px;font-size:12px;letter-spacing:-1.367px">_A2V</div>
<div class="t" style="left:859px;top:274px;font-size:12px;letter-spacing:-0.733px">_A3H</div>
<div class="t" style="left:859px;top:294px;font-size:12px;letter-spacing:-1.367px">_A3V</div>
<div class="t" style="left:859px;top:314px;font-size:12px;letter-spacing:-1.367px">_A4V</div>
<div class="t" style="left:859px;top:334px;font-size:12px;letter-spacing:-0.6px">_Stamp</div>
<svg width="993" height="847" style="left:0;top:0"><path d="M881.5,159.5 V175.5 L884.8,172.2 L887.6,178 L889.6,177 L886.9,171.3 H892.3 Z" fill="#fff" stroke="#000" stroke-width="1" stroke-linejoin="miter"/><circle cx="880.7" cy="158.7" r="11.6" fill="#d83a18" opacity="0.55"/></svg>
<!-- ========== PROPERTY EDITOR ========== -->
<div class="a" style="left:586px;top:513px;width:19px;height:98px;background:#eef0f0;border:1px solid #d9d9d9;border-right:none"></div>
<div class="a" style="left:586px;top:610px;width:19px;height:93px;background:#eef0f0;border:1px solid #d9d9d9;border-right:none"></div>
<div class="a" style="left:584px;top:415px;width:21px;height:98px;background:#fff;border:1px solid #d9d9d9;border-right:none"></div>
<div class="t" style="left:595.5px;top:464px;transform:translate(-50%,-50%) rotate(-90deg);letter-spacing:-0.35px">Property Editor</div>
<div class="t" style="left:597px;top:562px;transform:translate(-50%,-50%) rotate(-90deg);letter-spacing:-0.55px">Library Browser</div>
<div class="t" style="left:597px;top:659px;transform:translate(-50%,-50%) rotate(-90deg);letter-spacing:-0.55px">Selection Filter</div>
<div class="a" style="left:605px;top:416px;width:396px;height:19px;background:#dadada;border:1px solid #c9c9c9"></div>
<div class="t" style="left:610px;top:421px;font-size:12px;letter-spacing:-0.093px">Property Editor</div>
<svg width="30" height="12" style="left:962px;top:421px"><path d="M2.6,2.8 V0.6 H7.6 V5.6 H5.4" fill="none" stroke="#111" stroke-width="1.2"/><rect x="2.6" y="0" width="5.6" height="1.6" fill="#111"/><rect x="0.6" y="3.6" width="5" height="5" fill="#e8e8e8" stroke="#111" stroke-width="1.2"/><rect x="0" y="3" width="6.2" height="1.7" fill="#111"/><path d="M21.4,1.4 L28.4,8.4 M28.4,1.4 L21.4,8.4" stroke="#000" stroke-width="1.5"/></svg>
<div class="a" style="left:605px;top:437px;width:400px;height:420px;border-left:1px solid #6f7c86;border-top:1px solid #6f7c86"></div>
<div class="t" style="left:615px;top:453px;font-size:11.5px;letter-spacing:-0.478px">Selection:</div>
<div class="a" style="left:668px;top:447px;width:321px;height:20px;background:#e5e5e5;border:1px solid #adadad"></div>
<div class="t" style="left:671px;top:453px;font-size:11.5px;letter-spacing:-0.564px">No Selection</div>
<svg width="12" height="8" style="left:975px;top:454px"><path d="M1,1.5 L5.5,6 L10,1.5" fill="none" stroke="#333" stroke-width="1.1"/></svg>
<div class="a" style="left:615px;top:479px;width:374px;height:176px;border:1px solid #dcdcdc"></div>
<div class="a" style="left:621px;top:472px;width:94px;height:14px;background:#eef0f0"></div>
<div class="t" style="left:624px;top:475px;font-size:11.5px;letter-spacing:-0.488px">General Properties</div>
<div class="t" style="right:295.84px;top:500px;color:#7a7a7a;font-size:11.5px;letter-spacing:-0.16px">Layer:</div>
<div class="t" style="right:295.60px;top:523px;color:#7a7a7a;font-size:11.5px;letter-spacing:-0.4px">Color:</div>
<div class="t" style="right:295.69px;top:546px;color:#7a7a7a;font-size:11.5px;letter-spacing:-0.31px">Lineweight:</div>
<div class="t" style="right:295.74px;top:569px;color:#7a7a7a;font-size:11.5px;letter-spacing:-0.262px">Linetype:</div>
<div class="t" style="right:295.58px;top:591px;color:#7a7a7a;font-size:11.5px;letter-spacing:-0.421px">Linetype Scale:</div>
<div class="t" style="right:295.74px;top:613px;color:#7a7a7a;font-size:11.5px;letter-spacing:-0.26px">Draw Order:</div>
<div class="t" style="right:295.55px;top:635px;color:#7a7a7a;font-size:11.5px;letter-spacing:-0.45px">Handle:</div>
<div class="a" style="left:704px;top:494px;width:246px;height:20px;background:#cccccc;border:1px solid #c4c4c4"></div>
<svg width="12" height="8" style="left:934px;top:501px"><path d="M1,1.5 L5.5,6 L10,1.5" fill="none" stroke="#aaa" stroke-width="1.1"/></svg>
<div class="a" style="left:957px;top:494px;width:21px;height:20px;background:#cccccc;border:1px solid #c4c4c4"></div>
<svg width="20" height="20" style="left:957px;top:494px"><path d="M4.5,6 h12 M4.5,9.8 h12 M4.5,13.6 h12" stroke="#b0b0b0" stroke-width="1.6"/></svg>
<div class="a" style="left:704px;top:517px;width:275px;height:20px;background:#cccccc;border:1px solid #c4c4c4"></div>
<svg width="12" height="8" style="left:963px;top:524px"><path d="M1,1.5 L5.5,6 L10,1.5" fill="none" stroke="#aaa" stroke-width="1.1"/></svg>
<div class="a" style="left:704px;top:540px;width:275px;height:20px;background:#cccccc;border:1px solid #c4c4c4"></div>
<svg width="12" height="8" style="left:963px;top:547px"><path d="M1,1.5 L5.5,6 L10,1.5" fill="none" stroke="#aaa" stroke-width="1.1"/></svg>
<div class="a" style="left:704px;top:563px;width:275px;height:20px;background:#cccccc;border:1px solid #c4c4c4"></div>
<svg width="12" height="8" style="left:963px;top:570px"><path d="M1,1.5 L5.5,6 L10,1.5" fill="none" stroke="#aaa" stroke-width="1.1"/></svg>
<div class="a" style="left:708.5px;top:522px;width:16.5px;height:10px;background:#fff;border:1px solid #444"></div>
<div class="t" style="left:727px;top:523px;color:#7a7a7a;font-size:11.5px;letter-spacing:-0.443px">By Layer</div>
<div class="a" style="left:709px;top:550px;width:16px;height:1px;background:#555"></div>
<div class="t" style="left:727px;top:546px;color:#7a7a7a;font-size:11.5px;letter-spacing:-0.443px">By Layer</div>
<div class="t" style="left:707px;top:569px;color:#7a7a7a;font-size:11.5px;letter-spacing:-0.443px">By Layer</div>
<div class="a" style="left:704px;top:585px;width:275px;height:20px;background:#eef0f0;border:1px solid #d4d4d4;box-shadow:inset 0 0 0 1px #fff"></div>
<div class="a" style="left:704px;top:607px;width:275px;height:20px;background:#eef0f0;border:1px solid #d4d4d4;box-shadow:inset 0 0 0 1px #fff"></div>
<div class="a" style="left:704px;top:629px;width:275px;height:20px;background:#eef0f0;border:1px solid #d4d4d4;box-shadow:inset 0 0 0 1px #fff"></div>
</body></html>
